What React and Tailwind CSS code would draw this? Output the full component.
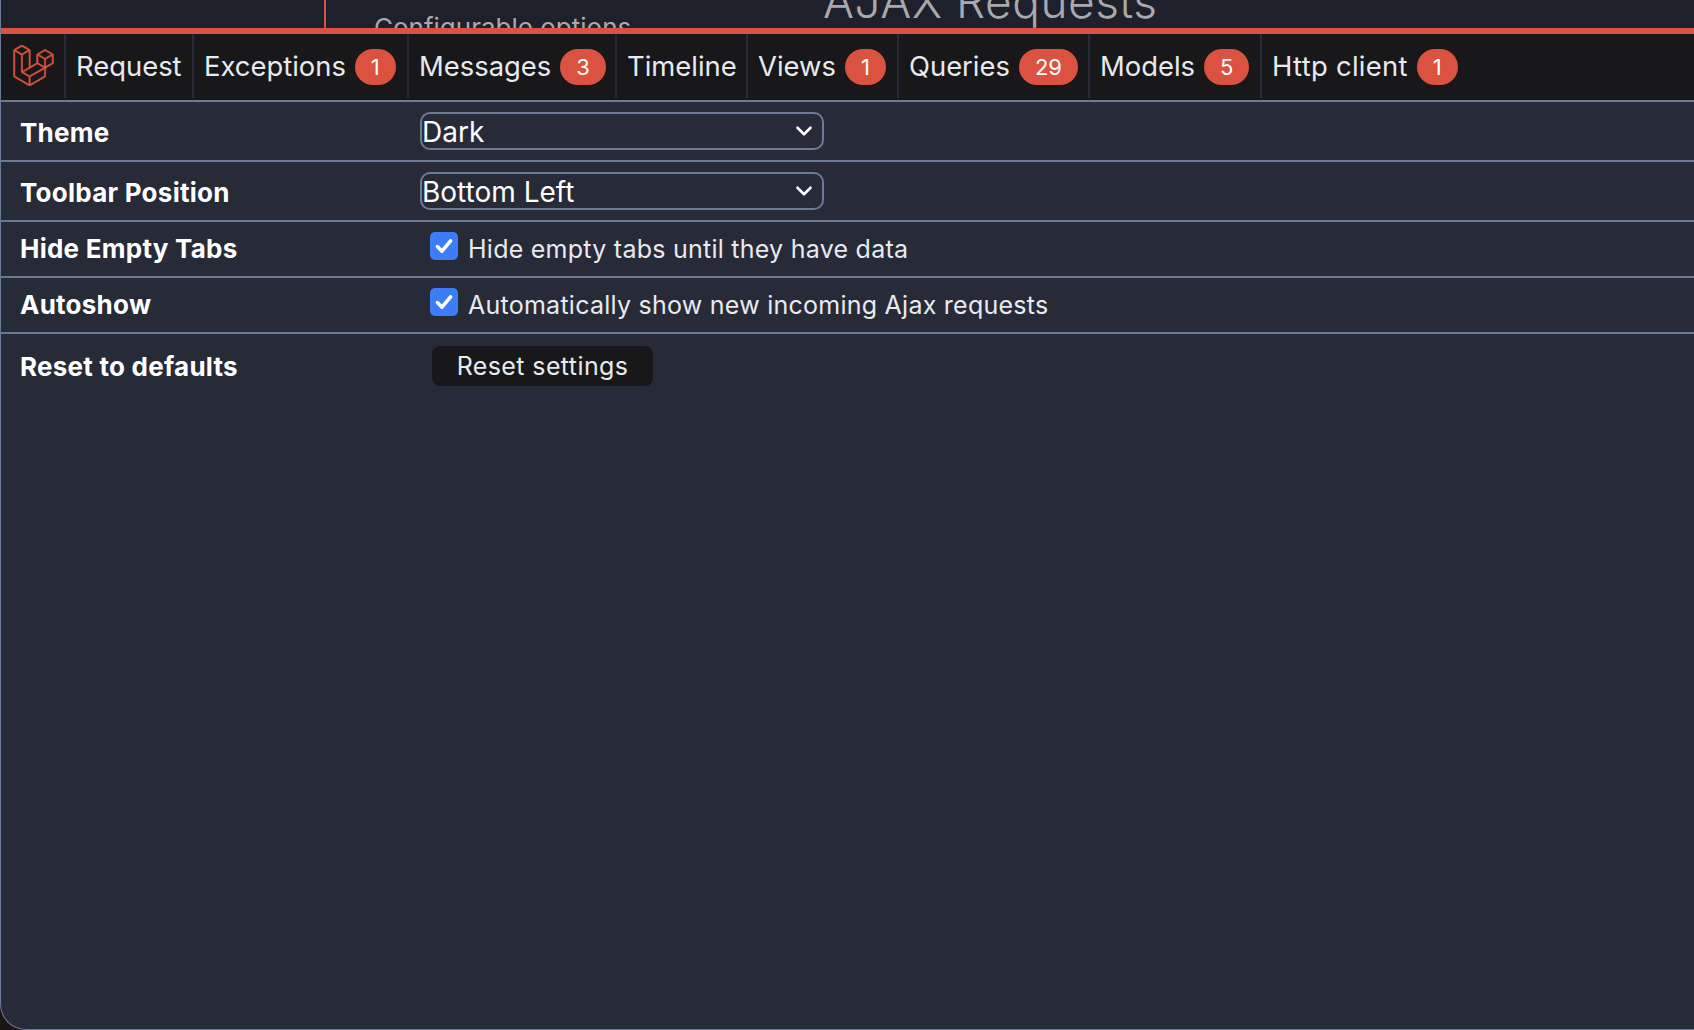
import { SiLaravel } from "react-icons/si";

const tabs = [
  { label: "Request", w: "w-[128px]" },
  { label: "Exceptions", badge: "1", w: "w-[215px]" },
  { label: "Messages", badge: "3", w: "w-[208px]" },
  { label: "Timeline", w: "w-[131px]" },
  { label: "Views", badge: "1", w: "w-[151px]" },
  { label: "Queries", badge: "29", w: "w-[191px]" },
  { label: "Models", badge: "5", w: "w-[172px]" },
  { label: "Http client", badge: "1", w: "w-auto" },
];

const Badge = ({ children }) => (
  <span className="ml-[9px] flex h-[36px] items-center justify-center rounded-full bg-[#dc5240] px-[16px] text-[22px] text-white">
    {children}
  </span>
);

const Chevron = () => (
  <svg viewBox="0 0 20 20" className="h-[26px] w-[26px]" fill="none" stroke="white" strokeWidth="2" strokeLinecap="round" strokeLinejoin="round">
    <path d="M5 7.5l5 5 5-5" />
  </svg>
);

const SelectBox = ({ value }) => (
  <div className="-ml-[1px] flex h-[38px] w-[404px] items-center justify-between rounded-[10px] border-2 border-[#6c7a94] pr-[5px] text-[28px] text-white">
    <span className="pt-[2px]">{value}</span>
    <Chevron />
  </div>
);

const CheckItem = ({ children }) => (
  <div className="flex items-center pt-[2px] pl-[9px] text-[25px] tracking-[0.25px] text-[#e8eaee]">
    <span className="-mt-[8px] mr-[10px] flex h-[28px] w-[28px] items-center justify-center rounded-[5px] bg-[#3b7cf7]">
      <svg viewBox="0 0 20 20" className="h-[24px] w-[24px]" fill="none" stroke="white" strokeWidth="3" strokeLinecap="round" strokeLinejoin="round">
        <path d="M4.5 10.5l3.8 3.8 7.2-8.6" />
      </svg>
    </span>
    {children}
  </div>
);

const Row = ({ label, h, children, last, nudge }) => (
  <div className={`flex items-center ${h} ${last ? "" : "border-b-2 border-[#6c7a94]"}`}>
    <div className={`w-[420px] pl-[19px] text-[26px] font-bold tracking-[0.25px] text-white ${nudge}`}>{label}</div>
    {children}
  </div>
);

export default function App() {
  return (
    <div className="h-[1030px] w-[1694px] overflow-hidden bg-[#1b1616] font-['Inter',sans-serif]">
      <div className="flex h-full flex-col overflow-hidden rounded-bl-[26px] border-b border-l border-[#6c7a94] bg-[#272b38]">
        <div className="flex h-[28px] shrink-0 overflow-hidden bg-[#1e212b]">
          <div className="h-full w-[325px] shrink-0 border-r-2 border-[#dc5240]" />
          <div className="ml-[48px] w-[449px] shrink-0 pt-[13px] text-[26px] leading-[30px] whitespace-nowrap text-[#a9a9ab]">
            Configurable options
          </div>
          <div className="-mt-[26px] text-[46px] leading-[54px] font-light tracking-[0.5px] whitespace-nowrap text-[#a9a9ab]">
            AJAX Requests
          </div>
        </div>
        <div className="h-[6px] shrink-0 bg-[#dc5240]" />

        <div className="flex h-[64px] shrink-0 bg-[#18181b]">
          <div className="flex w-[65px] shrink-0 items-center justify-center border-r-2 border-[#272b38] pb-[2px] pl-[2px] text-[#dc5240]">
            <SiLaravel size={41} strokeWidth={0.35} />
          </div>
          {tabs.map((tab) => (
            <div
              key={tab.label}
              className={`flex shrink-0 items-center border-r-2 border-[#272b38] pt-[2px] pl-[10px] text-[27.4px] text-[#e8eaee] last:border-r-0 last:tracking-[0.3px] ${tab.w}`}
            >
              {tab.label}
              {tab.badge && <Badge>{tab.badge}</Badge>}
            </div>
          ))}
        </div>
        <div className="h-[2px] shrink-0 bg-[#18181b]" />
        <div className="h-[2px] shrink-0 bg-[#6c7a94]" />

        <Row label="Theme" h="h-[60px]" nudge="pt-[2px]">
          <SelectBox value="Dark" />
        </Row>
        <Row label="Toolbar Position" h="h-[60px]" nudge="pt-[2px]">
          <SelectBox value="Bottom Left" />
        </Row>
        <Row label="Hide Empty Tabs" h="h-[56px]" nudge="pb-[2px]">
          <CheckItem>Hide empty tabs until they have data</CheckItem>
        </Row>
        <Row label="Autoshow" h="h-[56px]" nudge="pb-[2px]">
          <CheckItem>Automatically show new incoming Ajax requests</CheckItem>
        </Row>
        <Row label="Reset to defaults" h="h-[66px]" last nudge="pb-[2px]">
          <button className="mb-[2px] ml-[11px] h-[40px] w-[221px] rounded-[8px] bg-[#18181b] pt-[2px] text-[25px] tracking-[0.4px] text-[#e8eaee]">
            Reset settings
          </button>
        </Row>
      </div>
    </div>
  );
}
